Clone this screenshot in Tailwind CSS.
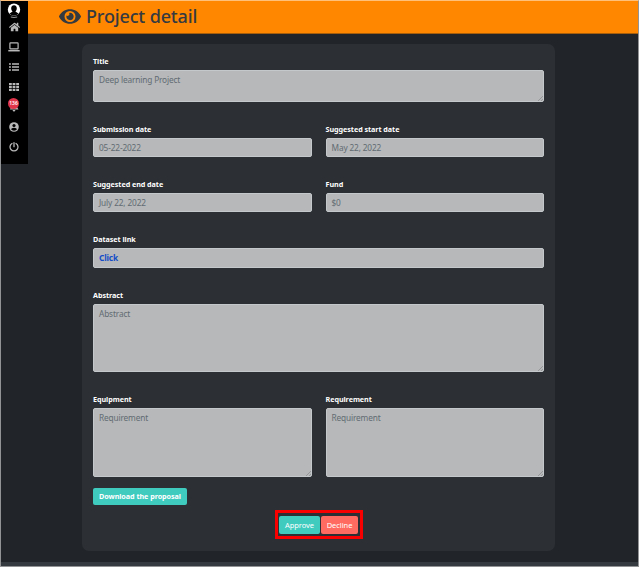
<!DOCTYPE html>
<html lang="en">
<head>
<meta charset="utf-8">
<title>Project detail</title>
<script src="https://cdn.jsdelivr.net/npm/@tailwindcss/browser@4"></script>
</head>
<body class="w-[639px] h-[567px] overflow-hidden bg-[#212529] font-['Noto_Sans','Open_Sans',sans-serif]">
<div class="w-[639px] h-[567px] flex flex-col border border-t-[#ffc07a] border-l-[#919395] border-r-[#919395] border-b-[#919395]">
  <div class="flex grow min-h-0">
    <nav class="w-[27px] h-[163px] shrink-0 bg-black flex flex-col items-center pr-px text-[#b9b9b9]">
      <svg class="w-[14px] h-[15px] mt-[2px]" viewBox="0 0 14 15"><circle cx="7" cy="6.700" r="6.200" fill="#fff"/><path d="M7 2.200c-2 0-2.900 1.400-2.800 3.200.1 1.300.6 2.500 1.400 3.200L2.500 10.500Q4.500 12.700 7 12.700T11.500 10.500L8.400 8.600c.8-.7 1.300-1.900 1.400-3.200C9.900 3.600 9 2.200 7 2.200z" fill="#000"/><path d="M3.800 14q3.200 1 6.400 0" stroke="#aaa" stroke-width=".9" fill="none"/></svg>
      <svg class="w-[11px] h-[10px] mt-[4px]" viewBox="0 0 576 512" fill="currentColor"><path d="M280 148 96 300v164a16 16 0 0 0 16 16h112a16 16 0 0 0 16-16v-96a16 16 0 0 1 16-16h64a16 16 0 0 1 16 16v96a16 16 0 0 0 16 16h112a16 16 0 0 0 16-16V300L296 148a12 12 0 0 0-16 0zm292 103-84-69V44a12 12 0 0 0-12-12h-56a12 12 0 0 0-12 12v72l-90-74a48 48 0 0 0-61 0L4 251a12 12 0 0 0-2 17l26 31a12 12 0 0 0 17 2l235-194a12 12 0 0 1 15 0l235 194a12 12 0 0 0 17-2l26-31a12 12 0 0 0-1-17z"/></svg>
      <svg class="w-[12px] h-[10px] mt-[10px]" viewBox="0 0 12 10" fill="none" stroke="currentColor"><rect x="1.900" y=".8" width="8.200" height="6" rx=".6" stroke-width="1.200"/><path d="M.3 8.700h11.400" stroke-width="1.500"/></svg>
      <svg class="w-[10px] h-[8px] mt-[11px]" viewBox="0 0 10 8" stroke="currentColor" stroke-width="1.400"><path d="M0 1h1.900M0 4h1.900M0 7h1.900M3 1h7M3 4h7M3 7h7"/></svg>
      <svg class="w-[10px] h-[8px] mt-[12px]" viewBox="0 0 10 8" fill="currentColor"><path d="M0 0h2.800v2.200H0zM3.600 0h2.800v2.200H3.600zM7.200 0H10v2.200H7.200zM0 2.900h2.800v2.200H0zM3.600 2.900h2.800v2.200H3.600zM7.200 2.900H10v2.200H7.200zM0 5.800h2.800V8H0zM3.600 5.800h2.800V8H3.600zM7.200 5.800H10V8H7.200z"/></svg>
      <div class="relative w-[12px] h-[14px] mt-[8px]">
        <svg class="w-[12px] h-[14px]" viewBox="0 0 12 14" fill="currentColor"><path d="M2 10.500 3 8V4h6v4l1.500 2.500zM4.600 11h2.800q-.2 1.500-1.400 1.500T4.600 11z"/></svg>
        <span class="absolute left-0 -top-px w-[11px] h-[11px] rounded-full bg-[#e0344a] text-white text-[5px] leading-[11px] font-semibold flex justify-center">136</span>
      </div>
      <svg class="w-[10px] h-[10px] mt-[9px]" viewBox="0 0 10 10"><circle cx="5" cy="5" r="4.800" fill="#b9b9b9"/><circle cx="5" cy="3.500" r="1.600" fill="#000"/><path d="M2 7.300Q2.300 5.800 5 5.800T8 7.300Q7 8.700 5 8.700T2 7.300z" fill="#000"/></svg>
      <svg class="w-[10px] h-[10px] mt-[10px]" viewBox="0 0 10 10" fill="none" stroke="currentColor" stroke-width="1.300" stroke-linecap="round"><path d="M3 1.500a4 4 0 1 0 4 0M5 .7v4"/></svg>
    </nav>
    <div class="flex flex-col w-[610px]">
      <header class="h-[33px] shrink-0 bg-[#ff8700] border-b border-[#a65e0d] flex items-center pl-[31px] gap-[5px] text-[#343a40]">
        <svg class="w-[22px] h-[15px] -mt-[2px]" viewBox="0 0 576 384" fill="currentColor"><path d="M572 177C518 71 410 0 288 0S58 71 4 177a32 32 0 0 0 0 30c54 106 162 177 284 177s230-71 284-177a32 32 0 0 0 0-30zM288 336a144 144 0 1 1 0-288 144 144 0 0 1 0 288zm0-240a95 95 0 0 0-25 4 48 48 0 0 1-67 67A96 96 0 1 0 288 96z"/></svg>
        <h1 class="text-[18px] leading-[30px] -mt-[2px] font-medium tracking-[-0.150px] whitespace-nowrap">Project detail</h1>
      </header>
      <main class="ml-[54px] mt-[10px] w-[473px] h-[507px] shrink-0 rounded-[7px] bg-[#2c2f33] px-[11px] pt-[11px] flex flex-col text-[8.300px] tracking-[-0.150px] text-[#626b73]">
        <section class="h-[68px]">
          <label class="block h-[15px] leading-[12px] text-[7.200px] tracking-[-0.050px] font-bold text-white">Title</label>
          <div class="relative h-[32px] rounded-[2px] bg-[#b6b8b9] border border-[#c4c8cb] px-[5px] leading-[18px]">Deep learning Project<svg class="absolute right-0 bottom-0 w-[5px] h-[5px]" viewBox="0 0 5 5" stroke="#777"><path stroke-width=".5" d="M0 5 5 0M3 5 5 3"/></svg></div>
        </section>
        <section class="h-[55px] grid grid-cols-2 gap-x-[14px]">
          <div><label class="block h-[15px] leading-[12px] text-[7.200px] tracking-[-0.050px] font-bold text-white">Submission date</label><div class="h-[19px] rounded-[2px] bg-[#b6b8b9] border border-[#c4c8cb] px-[5px] leading-[17px]">05-22-2022</div></div>
          <div><label class="block h-[15px] leading-[12px] text-[7.200px] tracking-[-0.050px] font-bold text-white">Suggested start date</label><div class="h-[19px] rounded-[2px] bg-[#b6b8b9] border border-[#c4c8cb] px-[5px] leading-[17px]">May 22, 2022</div></div>
        </section>
        <section class="h-[55px] grid grid-cols-2 gap-x-[14px]">
          <div><label class="block h-[15px] leading-[12px] text-[7.200px] tracking-[-0.050px] font-bold text-white">Suggested end date</label><div class="h-[19px] rounded-[2px] bg-[#b6b8b9] border border-[#c4c8cb] px-[5px] leading-[17px]">July 22, 2022</div></div>
          <div><label class="block h-[15px] leading-[12px] text-[7.200px] tracking-[-0.050px] font-bold text-white">Fund</label><div class="h-[19px] rounded-[2px] bg-[#b6b8b9] border border-[#c4c8cb] px-[5px] leading-[17px]">$0</div></div>
        </section>
        <section class="h-[56px]">
          <label class="block h-[15px] leading-[12px] text-[7.200px] tracking-[-0.050px] font-bold text-white">Dataset link</label>
          <div class="h-[20px] rounded-[2px] bg-[#b6b8b9] border border-[#c4c8cb] px-[5px] leading-[18px]"><a class="font-bold text-[#134bc8]">Click</a></div>
        </section>
        <section class="h-[104px]">
          <label class="block h-[15px] leading-[12px] text-[7.200px] tracking-[-0.050px] font-bold text-white">Abstract</label>
          <div class="relative h-[68px] rounded-[2px] bg-[#b6b8b9] border border-[#c4c8cb] px-[5px] leading-[18px]">Abstract<svg class="absolute right-0 bottom-0 w-[5px] h-[5px]" viewBox="0 0 5 5" stroke="#777"><path stroke-width=".5" d="M0 5 5 0M3 5 5 3"/></svg></div>
        </section>
        <section class="h-[95px] grid grid-cols-2 gap-x-[14px]">
          <div><label class="block h-[15px] leading-[12px] text-[7.200px] tracking-[-0.050px] font-bold text-white">Equipment</label><div class="relative h-[69px] rounded-[2px] bg-[#b6b8b9] border border-[#c4c8cb] px-[5px] leading-[18px]">Requirement<svg class="absolute right-0 bottom-0 w-[5px] h-[5px]" viewBox="0 0 5 5" stroke="#777"><path stroke-width=".5" d="M0 5 5 0M3 5 5 3"/></svg></div></div>
          <div><label class="block h-[15px] leading-[12px] text-[7.200px] tracking-[-0.050px] font-bold text-white">Requirement</label><div class="relative h-[69px] rounded-[2px] bg-[#b6b8b9] border border-[#c4c8cb] px-[5px] leading-[18px]">Requirement<svg class="absolute right-0 bottom-0 w-[5px] h-[5px]" viewBox="0 0 5 5" stroke="#777"><path stroke-width=".5" d="M0 5 5 0M3 5 5 3"/></svg></div></div>
        </section>
        <button class="w-[94px] h-[17px] shrink-0 rounded-[2px] bg-[#40cbbf] text-white text-[7.200px] tracking-[-0.050px] leading-[17px] font-bold whitespace-nowrap">Download the proposal</button>
        <div class="mt-[5px] ml-[182px] w-[88px] h-[29px] shrink-0 border-3 border-[#f80000] flex gap-[1px] pl-px pt-[3px] text-white text-[7.500px] tracking-[-0.050px] leading-[18px]">
          <button class="w-[41px] h-[18px] rounded-[2px] bg-[#40cbbf]">Approve</button>
          <button class="w-[37px] h-[18px] rounded-[2px] bg-[#ff6b60]">Decline</button>
        </div>
      </main>
    </div>
  </div>
  <footer class="h-[4px] shrink-0 bg-[#343a40]"></footer>
</div>
</body>
</html>
